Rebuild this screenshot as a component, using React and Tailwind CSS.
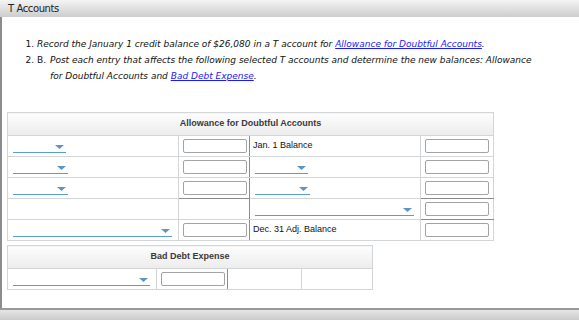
import React from 'react';

function Dropdown({ width }) {
  return (
    <div className="relative border-b border-[#5b9bd5] h-[13px]" style={{ width }}>
      <svg className="absolute right-[2px] top-[5px]" width="9" height="4" viewBox="0 0 9 4">
        <polygon points="0,0 9,0 4.5,4" fill="#5b95c9" />
      </svg>
    </div>
  );
}

function Box() {
  return <input type="text" className="block w-[64px] h-[14px] border border-[#a3a3a3] rounded-[2px] bg-white outline-none" />;
}

const cell = 'border border-[#d3d6d8] p-0 align-middle';
const dark = 'border-r-[#8c8c8c]';

function App() {
  return (
    <div className="w-[579px] h-[320px] flex flex-col bg-white overflow-hidden" style={{ fontFamily: '"DejaVu Sans", Verdana, sans-serif' }}>
      <div className="h-[17px] bg-gradient-to-b from-[#f4f4f4] to-[#cdcdcd] text-[10px] tracking-[-0.4px] leading-[17px] pl-[8px] text-[#222] shrink-0">
        T Accounts
      </div>

      <div className="flex-1 border-l-2 border-[#8c8c8c] pl-[5px] pt-[19px]">
        <div className="italic text-[9px] leading-[16px] text-[#111]">
          <div className="flex">
            <span className="w-[30px] text-right pr-[3px] not-italic shrink-0">1.</span>
            <span>
              Record the January 1 credit balance of $26,080 in a T account for{' '}
              <a className="text-[#1a1aff] underline">Allowance for Doubtful Accounts</a>.
            </span>
          </div>
          <div className="flex">
            <span className="w-[30px] text-right pr-[3px] not-italic shrink-0">2.</span>
            <span className="w-[13px] shrink-0 not-italic">B.</span>
            <div>
              <div>Post each entry that affects the following selected T accounts and determine the new balances: Allowance</div>
              <div>
                for Doubtful Accounts and <a className="text-[#1a1aff] underline">Bad Debt Expense</a>.
              </div>
            </div>
          </div>
        </div>

        <table className="mt-[28px] border-collapse table-fixed w-[486px]" style={{ fontFamily: '"Liberation Sans", Arial, sans-serif' }}>
          <colgroup>
            <col className="w-[171px]" />
            <col className="w-[71px]" />
            <col className="w-[171px]" />
            <col className="w-[73px]" />
          </colgroup>
          <thead>
            <tr>
              <th colSpan={4} className={`${cell} h-[23px] bg-gradient-to-b from-[#fdfdfd] to-[#ececec] text-[9px] font-bold text-[#3a3a3a] text-center`}>
                Allowance for Doubtful Accounts
              </th>
            </tr>
          </thead>
          <tbody className="text-[9px] text-[#111]">
            <tr className="h-[21px]">
              <td className={`${cell} pl-[5px]`}><Dropdown width={53} /></td>
              <td className={`${cell} ${dark} pl-[4px]`}><Box /></td>
              <td className={`${cell} pl-[3px]`}>Jan. 1 Balance</td>
              <td className={`${cell} pl-[4px]`}><Box /></td>
            </tr>
            <tr className="h-[21px]">
              <td className={`${cell} pl-[5px]`}><Dropdown width={55} /></td>
              <td className={`${cell} ${dark} pl-[4px]`}><Box /></td>
              <td className={`${cell} pl-[5px]`}><Dropdown width={53} /></td>
              <td className={`${cell} pl-[4px]`}><Box /></td>
            </tr>
            <tr className="h-[21px]">
              <td className={`${cell} pl-[5px]`}><Dropdown width={55} /></td>
              <td className={`${cell} ${dark} border-b-[#8c8c8c] pl-[4px]`}><Box /></td>
              <td className={`${cell} pl-[5px]`}><Dropdown width={55} /></td>
              <td className={`${cell} border-b-[#8c8c8c] pl-[4px]`}><Box /></td>
            </tr>
            <tr className="h-[21px]">
              <td className={cell}></td>
              <td className={`${cell} ${dark}`}></td>
              <td className={`${cell} pl-[5px]`}><Dropdown width={159} /></td>
              <td className={`${cell} border-b-[#8c8c8c] pl-[4px]`}><Box /></td>
            </tr>
            <tr className="h-[21px]">
              <td className={`${cell} pl-[5px]`}><Dropdown width={159} /></td>
              <td className={`${cell} ${dark} pl-[4px]`}><Box /></td>
              <td className={`${cell} pl-[3px]`}>Dec. 31 Adj. Balance</td>
              <td className={`${cell} pl-[4px]`}><Box /></td>
            </tr>
          </tbody>
        </table>

        <table className="mt-[4px] border-collapse table-fixed w-[365px]" style={{ fontFamily: '"Liberation Sans", Arial, sans-serif' }}>
          <colgroup>
            <col className="w-[149px]" />
            <col className="w-[71px]" />
            <col className="w-[74px]" />
            <col className="w-[71px]" />
          </colgroup>
          <thead>
            <tr>
              <th colSpan={4} className={`${cell} h-[23px] bg-gradient-to-b from-[#fdfdfd] to-[#ececec] text-[9px] font-bold text-[#3a3a3a] text-center`}>
                Bad Debt Expense
              </th>
            </tr>
          </thead>
          <tbody>
            <tr className="h-[21px]">
              <td className={`${cell} pl-[5px]`}><Dropdown width={137} /></td>
              <td className={`${cell} ${dark} pl-[4px]`}><Box /></td>
              <td className={cell}></td>
              <td className={cell}></td>
            </tr>
          </tbody>
        </table>
      </div>

      <div className="h-[12px] shrink-0 border-t-2 border-[#9a9a9a] bg-gradient-to-b from-[#e6e6e6] to-[#cbcbcb]" />
    </div>
  );
}

export default App;
